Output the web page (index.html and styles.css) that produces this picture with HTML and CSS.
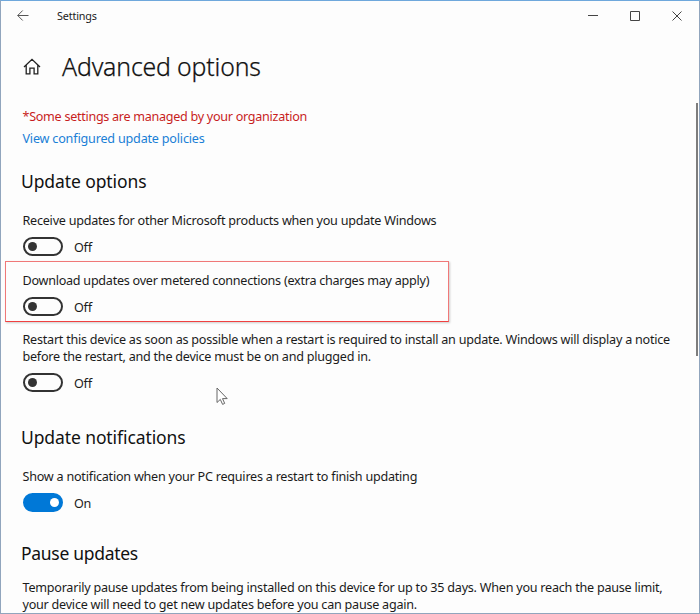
FILE: index.html
```html
<!DOCTYPE html>
<html lang="en">
<head>
<meta charset="utf-8">
<title>Settings</title>
<link rel="stylesheet" href="styles.css">
</head>
<body>
<div class="window">
  <header class="titlebar">
    <svg class="back" width="12" height="12" viewBox="0 0 12 12"><path d="M11.500 5.500H.8M5.700.5l-5 5 5 5"/></svg>
    <span class="app-name">Settings</span>
    <div class="controls">
      <svg width="10" height="10" viewBox="0 0 10 10"><path d="M0 4.500h10"/></svg>
      <svg width="10" height="10" viewBox="0 0 10 10"><path d="M.5.5h9v9h-9z"/></svg>
      <svg width="10" height="10" viewBox="0 0 10 10"><path d="m.5.5 9 9M9.500.5l-9 9"/></svg>
    </div>
  </header>
  <div class="page-head">
    <svg class="home" width="18" height="17" viewBox="0 0 18 17"><path d="M1 9 9 1.300 17 9M3.200 7.200v8.600h3.700v-5.600h4.200v5.600h3.700V7.200"/></svg>
    <h1>Advanced options</h1>
  </div>
  <main>
    <p class="managed">*Some settings are managed by your organization</p>
    <a class="policies">View configured update policies</a>

    <h2 class="h-options">Update options</h2>
    <section class="setting">
      <p class="t-receive">Receive updates for other Microsoft products when you update Windows</p>
      <div class="switch"><span class="track"></span><span class="state">Off</span></div>
    </section>
    <section class="setting highlighted">
      <p class="t-download">Download updates over metered connections (extra charges may apply)</p>
      <div class="switch"><span class="track"></span><span class="state">Off</span></div>
    </section>
    <section class="setting restart">
      <p class="t-restart1">Restart this device as soon as possible when a restart is required to install an update. Windows will display a notice</p>
      <p class="t-restart2">before the restart, and the device must be on and plugged in.</p>
      <div class="switch"><span class="track"></span><span class="state">Off</span></div>
    </section>

    <h2 class="h-notify">Update notifications</h2>
    <section class="setting">
      <p class="t-show">Show a notification when your PC requires a restart to finish updating</p>
      <div class="switch"><span class="track on"></span><span class="state">On</span></div>
    </section>

    <h2 class="h-pause">Pause updates</h2>
    <section class="setting">
      <p class="t-pause1">Temporarily pause updates from being installed on this device for up to 35 days. When you reach the pause limit,</p>
      <p class="t-pause2">your device will need to get new updates before you can pause again.</p>
    </section>
  </main>
  <div class="scrollbar"></div>
  <svg class="cursor" width="13" height="19" viewBox="0 0 13 19"><path d="M1 1v14.500l3.300-3.100 2.300 5 2.100-1-2.200-4.800h4.700z"/></svg>
</div>
</body>
</html>
```
FILE: styles.css
```css
*, *::before { box-sizing: border-box; }
body { margin: 0; }
.window {
  position: relative;
  width: 700px;
  height: 614px;
  overflow: hidden;
  background: #fdfdfd;
  border: 1px solid #91a5bd;
  border-top-color: #6fa8dc;
  font: 12.6px/17px "Noto Sans", "Open Sans", sans-serif;
  font-feature-settings: "liga" 1;
  letter-spacing: -0.24px;
  color: #1b1b1b;
}
h1, h2, p { margin: 0; font-weight: 400; white-space: nowrap; }
svg { fill: none; stroke: #444; stroke-width: 1; }
.titlebar { display: flex; align-items: center; height: 29px; padding: 0 17px 0 16px; }
.back { stroke: #555; }
.app-name { margin-left: 28px; font-size: 10.8px; letter-spacing: -0.15px; }
.controls { display: flex; gap: 32px; margin-left: auto; }
.page-head { display: flex; align-items: center; height: 72px; padding-left: 22px; }
.home { stroke: #222; stroke-width: 1.3; }
h1 {
  margin-left: 21px;
  padding-bottom: 1px;
  font-size: 24.800px;
  line-height: 36px;
  font-weight: 300;
  letter-spacing: -0.15px;
  color: #111;
  -webkit-text-stroke: 0.25px #111;
}
main { padding: 4px 0 0 21.500px; }
.managed { line-height: 22px; letter-spacing: -0.290px; color: #c81e1e; }
.policies { display: block; width: max-content; line-height: 22px; letter-spacing: -0.2px; color: #1a7fd6; }
h2 { height: 30px; margin: 16px 0 16px -1.500px; font-size: 17.500px; line-height: 30px; letter-spacing: -0.1px; color: #111; }
.h-notify { margin-top: 30px; }
.h-pause { margin-top: 26px; margin-bottom: 11px; letter-spacing: -0.300px; }
.setting { position: relative; margin-bottom: 16px; }
.highlighted { margin-bottom: 15px; }
.t-download { letter-spacing: -0.26px; }
.switch { display: flex; align-items: center; gap: 11.500px; height: 19px; margin-top: 8px; }
.state { padding-top: 2px; }
.track {
  display: flex;
  align-items: center;
  width: 40px;
  height: 19px;
  padding: 0 3px;
  border: 2px solid #333;
  border-radius: 10px;
}
.track::before { content: ""; width: 9px; height: 9px; border-radius: 50%; background: #333; }
.track.on { justify-content: flex-end; border-color: #0078d7; background: #0078d7; padding-right: 2px; }
.track.on::before { background: #fff; }
.highlighted::before {
  content: "";
  position: absolute;
  left: -17.500px;
  top: -11px;
  width: 444px;
  height: 61px;
  border: 1px solid #f07878;
  border-bottom-color: #f04040;
  box-shadow: 1px 1px 2px #ccc;
}
.scrollbar { position: absolute; top: 102px; right: 1px; width: 2px; height: 253px; background: #7d7d7d; }
.cursor { position: absolute; left: 215px; top: 386px; fill: #fff; stroke: #666; }
```
